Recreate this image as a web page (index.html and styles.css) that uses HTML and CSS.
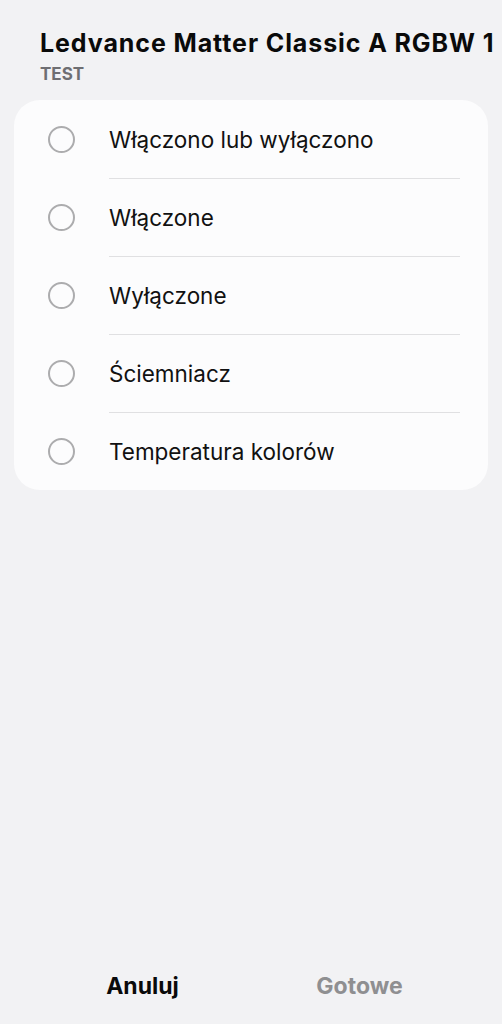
FILE: index.html
```html
<!DOCTYPE html>
<html lang="pl">
<head>
<meta charset="utf-8">
<link rel="stylesheet" href="styles.css">
</head>
<body>
<div class="screen">
  <header class="head">
    <h1 class="title">Ledvance Matter Classic A RGBW 1</h1>
    <div class="sub">TEST</div>
  </header>
  <ul class="card">
    <li class="row"><span class="radio"></span><span class="label">Włączono lub wyłączono</span></li>
    <li class="row"><span class="radio"></span><span class="label">Włączone</span></li>
    <li class="row"><span class="radio"></span><span class="label">Wyłączone</span></li>
    <li class="row"><span class="radio"></span><span class="label">Ściemniacz</span></li>
    <li class="row"><span class="radio"></span><span class="label">Temperatura kolorów</span></li>
  </ul>
  <div class="spacer"></div>
  <footer class="actions">
    <button class="btn cancel">Anuluj</button>
    <button class="btn done">Gotowe</button>
  </footer>
</div>
</body>
</html>
```
FILE: styles.css
```css
* { box-sizing: border-box; }
html, body { margin: 0; padding: 0; }
body {
  background: #f2f2f4;
  font-family: Inter, Roboto, sans-serif;
  color: #111;
  width: 502px;
  height: 1024px;
  overflow: hidden;
}
.screen {
  display: flex;
  flex-direction: column;
  height: 1024px;
}
.head {
  padding: 26px 0 0 40px;
  overflow: hidden;
}
.title {
  margin: 0;
  font-size: 25px;
  font-weight: 700;
  line-height: 34px;
  white-space: nowrap;
  color: #0a0a0a;
  letter-spacing: 0.9px;
}
.sub {
  margin-top: 4px;
  font-size: 17px;
  font-weight: 700;
  color: #6e6e72;
  line-height: 21px;
}
.card {
  list-style: none;
  margin: 15px 14px 0 14px;
  padding: 0;
  background: #fcfcfd;
  border-radius: 26px;
}
.row {
  display: flex;
  align-items: center;
  height: 78px;
  position: relative;
}
.row + .row::before {
  content: "";
  position: absolute;
  top: 0;
  left: 95px;
  right: 28px;
  height: 1px;
  background: #e0e0e2;
}
.radio {
  width: 27px;
  height: 27px;
  border-radius: 50%;
  border: 2px solid #acacae;
  margin-left: 34px;
  flex: none;
}
.label {
  margin-left: 34px;
  font-size: 22.5px;
  color: #111;
}
.spacer { flex: 1; }
.actions {
  display: flex;
  padding: 24px 34px 0 34px;
  height: 76px;
}
.btn {
  flex: 1;
  background: none;
  border: 0;
  font-family: Inter, Roboto, sans-serif;
  font-size: 23px;
  font-weight: 700;
  padding: 0;
  align-self: flex-start;
  line-height: 28px;
}
.cancel { color: #0a0a0a; }
.done { color: #8f8f91; }
```
